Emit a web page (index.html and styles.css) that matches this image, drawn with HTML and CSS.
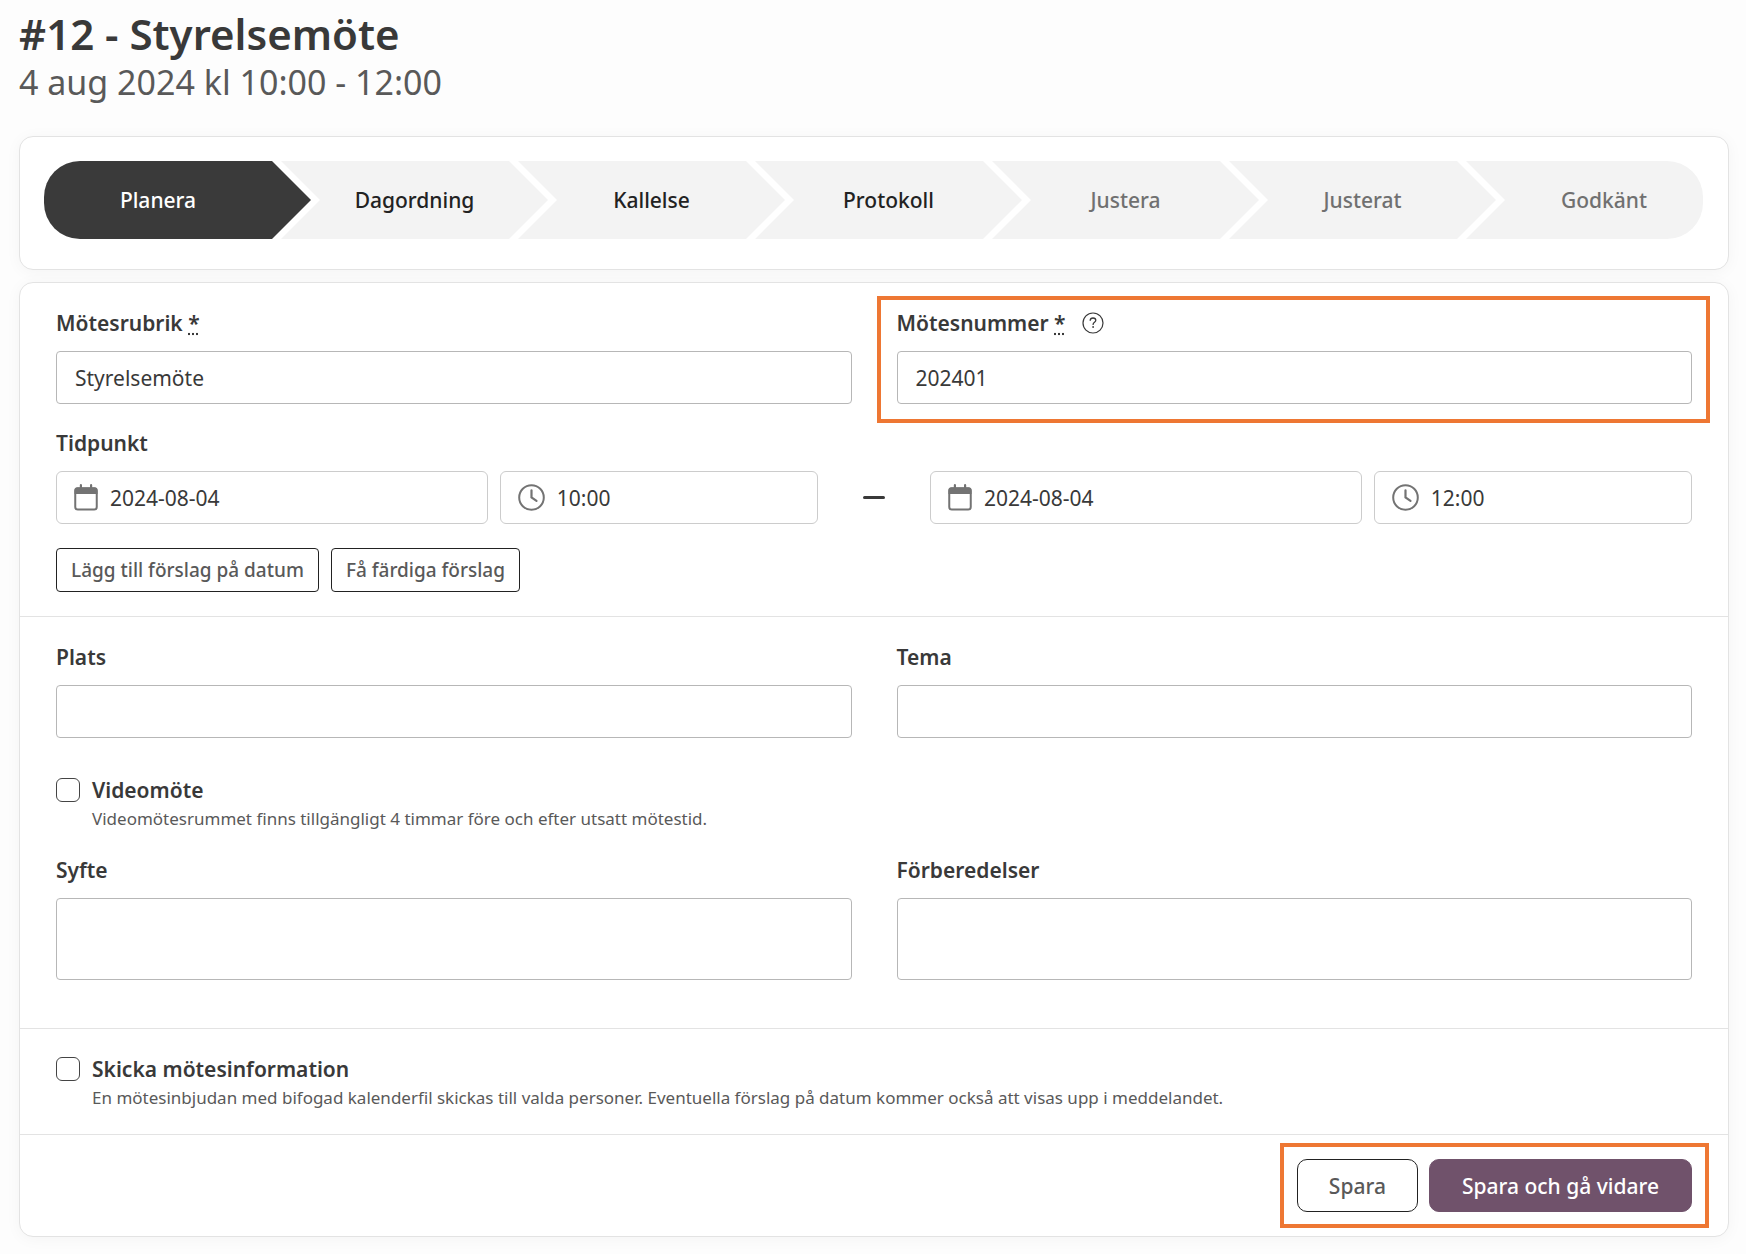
FILE: index.html
```html
<!DOCTYPE html>
<html lang="sv">
<head>
  <meta charset="utf-8">
  <meta name="viewport" content="width=device-width, initial-scale=1">
  <title>#12 - Styrelsemöte</title>
  <link rel="stylesheet" href="styles.css">
</head>
<body>
  <svg class="sprite" aria-hidden="true">
    <symbol id="icon-calendar" viewBox="0 0 24 27">
      <rect x="1.25" y="4.5" width="21.5" height="21" rx="2.6" fill="none" stroke="currentColor" stroke-width="2"/>
      <path d="M.5 10V6A2.8 2.8 0 0 1 3.300 3.200H20.700A2.800 2.800 0 0 1 23.500 6V10Z" fill="currentColor"/>
      <path d="M6.900 1.200V5M17.100 1.200V5" stroke="currentColor" stroke-width="2.200" stroke-linecap="round"/>
    </symbol>
    <symbol id="icon-clock" viewBox="0 0 27 27">
      <circle cx="13.500" cy="13.500" r="12.300" fill="none" stroke="currentColor" stroke-width="2"/>
      <path d="M13.500 6.300V13.500L18.500 16.900" fill="none" stroke="currentColor" stroke-width="2.200" stroke-linecap="round"/>
    </symbol>
    <symbol id="icon-help" viewBox="0 0 22 22">
      <circle cx="11" cy="11" r="10" fill="none" stroke="currentColor" stroke-width="1.200"/>
      <path d="M8.200 8.300C8.300 6.800 9.500 6 11 6S13.800 6.900 13.800 8.300C13.800 10.200 11.100 10.200 11.100 12.400" fill="none" stroke="currentColor" stroke-width="1.300" stroke-linecap="round"/>
      <circle cx="11.100" cy="15" r=".9" fill="currentColor"/>
    </symbol>
  </svg>

  <main class="page">
    <header class="page-header">
      <h1 class="page-title">#12 - Styrelsemöte</h1>
      <p class="page-date">4 aug 2024 kl 10:00 - 12:00</p>
    </header>

    <nav class="card steps-card" aria-label="Mötessteg">
      <ol class="steps">
        <li class="step step-current"><a class="step-link" href="#planera" aria-current="step">Planera</a></li>
        <li class="step"><a class="step-link" href="#dagordning">Dagordning</a></li>
        <li class="step"><a class="step-link" href="#kallelse">Kallelse</a></li>
        <li class="step"><a class="step-link" href="#protokoll">Protokoll</a></li>
        <li class="step step-muted"><a class="step-link" href="#justera">Justera</a></li>
        <li class="step step-muted"><a class="step-link" href="#justerat">Justerat</a></li>
        <li class="step step-muted"><a class="step-link" href="#godkant">Godkänt</a></li>
      </ol>
    </nav>

    <form class="card" id="planera">
      <section class="section">
        <div class="columns">
          <div class="field">
            <div class="label-row">
              <label class="label" for="title">Mötesrubrik <abbr title="obligatorisk">*</abbr></label>
            </div>
            <input class="input" id="title" type="text" value="Styrelsemöte">
          </div>
          <div class="field field-marked">
            <div class="label-row">
              <label class="label" for="number">Mötesnummer <abbr title="obligatorisk">*</abbr></label>
              <button class="help" type="button" aria-label="Hjälp"><svg class="help-icon"><use href="#icon-help"/></svg></button>
            </div>
            <input class="input" id="number" type="text" value="202401">
          </div>
        </div>

        <fieldset class="time">
          <legend class="label time-label">Tidpunkt</legend>
          <div class="time-row">
            <div class="time-group">
              <label class="picker"><svg class="calendar-icon"><use href="#icon-calendar"/></svg><input class="picker-input" type="text" value="2024-08-04" aria-label="Startdatum"></label>
              <label class="picker"><svg class="clock-icon"><use href="#icon-clock"/></svg><input class="picker-input" type="text" value="10:00" aria-label="Starttid"></label>
            </div>
            <span class="time-dash"></span>
            <div class="time-group">
              <label class="picker"><svg class="calendar-icon"><use href="#icon-calendar"/></svg><input class="picker-input" type="text" value="2024-08-04" aria-label="Slutdatum"></label>
              <label class="picker"><svg class="clock-icon"><use href="#icon-clock"/></svg><input class="picker-input" type="text" value="12:00" aria-label="Sluttid"></label>
            </div>
          </div>
        </fieldset>

        <div class="suggestions">
          <button class="button-small" type="button">Lägg till förslag på datum</button>
          <button class="button-small" type="button">Få färdiga förslag</button>
        </div>
      </section>

      <section class="section section-details">
        <div class="columns">
          <div class="field">
            <div class="label-row"><label class="label" for="place">Plats</label></div>
            <input class="input" id="place" type="text">
          </div>
          <div class="field">
            <div class="label-row"><label class="label" for="theme">Tema</label></div>
            <input class="input" id="theme" type="text">
          </div>
        </div>

        <div class="check check-video">
          <input class="checkbox" id="video" type="checkbox" aria-describedby="video-hint">
          <label class="label" for="video">Videomöte</label>
          <p class="hint" id="video-hint">Videomötesrummet finns tillgängligt 4 timmar före och efter utsatt mötestid.</p>
        </div>

        <div class="columns">
          <div class="field">
            <div class="label-row"><label class="label" for="purpose">Syfte</label></div>
            <textarea class="input textarea" id="purpose"></textarea>
          </div>
          <div class="field">
            <div class="label-row"><label class="label" for="preparation">Förberedelser</label></div>
            <textarea class="input textarea" id="preparation"></textarea>
          </div>
        </div>
      </section>

      <section class="section">
        <div class="check">
          <input class="checkbox" id="send" type="checkbox" aria-describedby="send-hint">
          <label class="label" for="send">Skicka mötesinformation</label>
          <p class="hint" id="send-hint">En mötesinbjudan med bifogad kalenderfil skickas till valda personer. Eventuella förslag på datum kommer också att visas upp i meddelandet.</p>
        </div>
      </section>

      <footer class="actions">
        <div class="actions-group">
          <button class="button" type="submit">Spara</button>
          <button class="button button-primary" type="submit">Spara och gå vidare</button>
        </div>
      </footer>
    </form>
  </main>
</body>
</html>
```
FILE: styles.css
```css
:root {
  --ink: #393939;
  --ink-soft: #595959;
  --line: #e3e3e3;
  --mark: #ee7733;
  --point: 39px;
}

*,
*::before,
*::after {
  box-sizing: border-box;
}

body {
  margin: 0;
  background: #fdfdfd;
  color: var(--ink);
  font-family: "Noto Sans", "Open Sans", sans-serif;
  font-size: 21px;
  line-height: 24px;
}

button,
input,
textarea {
  font: inherit;
  color: inherit;
}

.sprite {
  display: none;
}

.page {
  display: flex;
  flex-direction: column;
  gap: 12px;
  padding: 10px 17px 16px 19px;
}

.page-header {
  padding-bottom: 18px;
}

.page-title {
  margin: 0;
  font-size: 42px;
  font-weight: 600;
  line-height: 48px;
}

.page-date {
  margin: 0;
  color: var(--ink-soft);
  font-size: 34px;
  line-height: 48px;
}

.card {
  background: #fff;
  border: 1px solid var(--line);
  border-radius: 14px;
  box-shadow: 0 2px 16px rgba(0, 0, 0, 0.04);
}

/* Step bar: every step reaches into the notch of the next one */
.steps-card {
  padding: 24px 25px 30px 24px;
}

.steps {
  display: grid;
  grid-template-columns: repeat(7, 1fr);
  margin: 0;
  padding: 0;
  list-style: none;
}

.step-link {
  display: flex;
  align-items: center;
  justify-content: center;
  height: 78px;
  margin-right: -30px;
  padding: 0 var(--point);
  background: #f3f3f3;
  color: #222;
  font-weight: 500;
  text-decoration: none;
  clip-path: polygon(0 0, calc(100% - var(--point)) 0, 100% 50%, calc(100% - var(--point)) 100%, 0 100%, var(--point) 50%);
}

.step-current .step-link {
  padding-left: 0;
  border-radius: 36px 0 0 36px;
  background: #3a3a3a;
  color: #fff;
  clip-path: polygon(0 0, calc(100% - var(--point)) 0, 100% 50%, calc(100% - var(--point)) 100%, 0 100%);
}

.step-muted .step-link {
  color: #707070;
}

.step:last-child .step-link {
  margin-right: 0;
  padding-right: 0;
  border-radius: 0 36px 36px 0;
  clip-path: polygon(0 0, 100% 0, 100% 100%, 0 100%, var(--point) 50%);
}

.section {
  padding: 28px 36px 24px;
  border-bottom: 1px solid var(--line);
}

.section-details {
  padding-bottom: 48px;
}

.columns {
  display: grid;
  grid-template-columns: 1fr 1fr;
  gap: 45px;
}

.field {
  display: flex;
  flex-direction: column;
  gap: 16px;
}

.field-marked,
.actions-group {
  position: relative;
}

.field-marked::after,
.actions-group::after {
  content: "";
  position: absolute;
  inset: -16px -17px;
  border: 4px solid var(--mark);
  pointer-events: none;
}

.field-marked::after {
  inset: -15px -18px -19px -20px;
}

.label-row {
  display: flex;
  align-items: center;
  gap: 16px;
  height: 24px;
}

.label {
  font-weight: 600;
}

.help {
  display: flex;
  padding: 0;
  border: 0;
  background: none;
}

.help-icon {
  width: 22px;
  height: 22px;
}

.input {
  display: block;
  width: 100%;
  height: 53px;
  margin: 0;
  padding: 0 18px;
  border: 1px solid #b7b7b7;
  border-radius: 4px;
  background: #fff;
}

.textarea {
  height: 82px;
  padding: 12px 18px;
  resize: none;
}

.time {
  min-width: 0;
  margin: 27px 0 24px;
  padding: 0;
  border: 0;
}

.time-label {
  padding: 0 0 16px;
}

.time-row {
  display: flex;
  align-items: center;
}

.time-group {
  display: grid;
  flex: 1;
  grid-template-columns: 19fr 14fr;
  gap: 12px;
}

.time-dash {
  width: 22px;
  height: 3px;
  margin: 0 45px;
  border-radius: 2px;
  background: var(--ink);
}

.picker {
  display: flex;
  align-items: center;
  gap: 12px;
  height: 53px;
  padding: 0 17px;
  border: 1px solid #ccc;
  border-radius: 6px;
}

.calendar-icon,
.clock-icon {
  flex: none;
  width: 24px;
  height: 27px;
  color: #737373;
}

.clock-icon {
  width: 27px;
}

.picker-input {
  flex: 1;
  width: 0;
  padding: 0;
  border: 0;
  outline: 0;
  background: none;
}

.suggestions {
  display: flex;
  gap: 12px;
}

.button-small {
  height: 44px;
  padding: 0 14px;
  border: 1px solid #222;
  border-radius: 4px;
  background: #fff;
  color: var(--ink-soft);
  font-size: 19px;
  font-weight: 500;
}

.check {
  display: grid;
  grid-template-columns: 24px 1fr;
  gap: 5px 12px;
}

.check-video {
  margin: 40px 0 27px;
}

.checkbox {
  width: 24px;
  height: 24px;
  margin: 0;
  appearance: none;
  border: 1px solid #444;
  border-radius: 6px;
  background: #fff;
}

.hint {
  grid-column: 2;
  margin: 0;
  color: var(--ink-soft);
  font-size: 17px;
}

.actions {
  display: flex;
  justify-content: flex-end;
  padding: 24px 36px;
}

.actions-group {
  display: flex;
  gap: 11px;
}

.button {
  height: 53px;
  padding: 0 31px;
  border: 1px solid #222;
  border-radius: 10px;
  background: #fff;
  color: var(--ink-soft);
  font-weight: 500;
}

.button-primary {
  padding: 0 32px;
  border-color: #70526b;
  background: #70526b;
  color: #fff;
}
```
